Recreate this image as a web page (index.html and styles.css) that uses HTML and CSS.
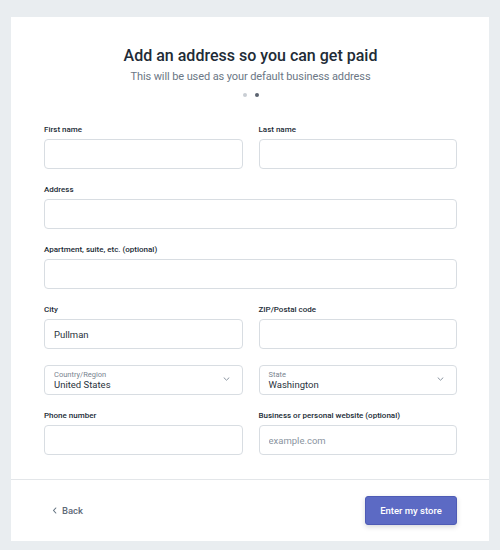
FILE: index.html
```html
<!DOCTYPE html>
<html lang="en">
<head>
<meta charset="utf-8">
<title>Add an address</title>
<link rel="stylesheet" href="styles.css">
</head>
<body>
<div class="card">
  <div class="main">
    <h1 class="title">Add an address so you can get paid</h1>
    <p class="subtitle">This will be used as your default business address</p>
    <div class="dots"><span class="dot"></span><span class="dot active"></span></div>
    <form class="form">
      <div class="row two">
        <div class="field"><label class="label">First name</label><input class="input" type="text"></div>
        <div class="field"><label class="label">Last name</label><input class="input" type="text"></div>
      </div>
      <div class="row">
        <div class="field"><label class="label">Address</label><input class="input" type="text"></div>
      </div>
      <div class="row">
        <div class="field"><label class="label">Apartment, suite, etc. (optional)</label><input class="input" type="text"></div>
      </div>
      <div class="row two">
        <div class="field"><label class="label">City</label><input class="input" type="text" value="Pullman"></div>
        <div class="field"><label class="label">ZIP/Postal code</label><input class="input" type="text"></div>
      </div>
      <div class="row two">
        <div class="select">
          <div class="select-text"><span class="select-label">Country/Region</span><span class="select-value">United States</span></div>
          <svg class="chevron" width="7" height="4" viewBox="0 0 7 4"><path d="M1 0.8l2.5 2.4 2.5-2.4" fill="none" stroke="#8a94a0" stroke-width="1" stroke-linecap="round" stroke-linejoin="round"/></svg>
        </div>
        <div class="select">
          <div class="select-text"><span class="select-label">State</span><span class="select-value">Washington</span></div>
          <svg class="chevron" width="7" height="4" viewBox="0 0 7 4"><path d="M1 0.8l2.5 2.4 2.5-2.4" fill="none" stroke="#8a94a0" stroke-width="1" stroke-linecap="round" stroke-linejoin="round"/></svg>
        </div>
      </div>
      <div class="row two">
        <div class="field"><label class="label">Phone number</label><input class="input" type="text"></div>
        <div class="field"><label class="label">Business or personal website (optional)</label><input class="input" type="text" placeholder="example.com"></div>
      </div>
    </form>
  </div>
  <div class="footer">
    <a class="back" href="#"><svg class="back-icon" width="5" height="7" viewBox="0 0 5 7"><path d="M3.8 1L1.5 3.5 3.8 6" fill="none" stroke="#637381" stroke-width="1.1" stroke-linecap="round" stroke-linejoin="round"/></svg>Back</a>
    <button class="primary" type="button">Enter my store</button>
  </div>
</div>
</body>
</html>
```
FILE: styles.css
```css
* { box-sizing: border-box; }
html, body { margin: 0; padding: 0; }
body {
  background: #e9edf0;
  font-family: Roboto, "Liberation Sans", Arial, sans-serif;
  color: #212b36;
  height: 550px;
  padding-top: 17px;
}
.card {
  background: #fff;
  margin: 0 11px;
  height: 524px;
  display: flex;
  flex-direction: column;
}
.main {
  padding: 28px 32px 24px 33px;
  border-bottom: 1px solid #e3e6e9;
}
.title {
  margin: 0;
  font-size: 16px;
  line-height: 22px;
  font-weight: 500;
  text-align: center;
  color: #212b36;
}
.subtitle {
  margin: 2px 0 0;
  font-size: 11px;
  line-height: 16px;
  letter-spacing: -0.1px;
  text-align: center;
  color: #6b7785;
}
.dots {
  display: flex;
  justify-content: center;
  gap: 8px;
  margin-top: 8px;
  height: 4px;
}
.dot {
  width: 4px;
  height: 4px;
  border-radius: 50%;
  background: #c9ced4;
}
.dot.active { background: #5c6470; }
.form {
  margin-top: 28px;
  display: flex;
  flex-direction: column;
  gap: 16px;
}
.row {
  display: grid;
  grid-template-columns: 1fr;
  gap: 16px;
}
.row.two { grid-template-columns: 1fr 1fr; }
.field { display: flex; flex-direction: column; }
.label {
  font-size: 8px;
  line-height: 10px;
  font-weight: 500;
  color: #212b36;
  margin-bottom: 4px;
}
.input {
  height: 30px;
  width: 100%;
  border: 1px solid #d8dde2;
  border-radius: 4px;
  padding: 0 9px;
  font-family: inherit;
  font-size: 9.5px;
  color: #2a333d;
  background: #fff;
  outline: none;
}
.input::placeholder { color: #8a94a0; }
.select {
  height: 30px;
  border: 1px solid #d8dde2;
  border-radius: 4px;
  padding: 0 12px 0 9px;
  display: flex;
  align-items: center;
  justify-content: space-between;
}
.select-text { display: flex; flex-direction: column; }
.select-label { font-size: 7.5px; line-height: 9px; color: #7a8590; }
.select-value { font-size: 9.5px; line-height: 12px; color: #2a333d; }
.chevron { display: block; margin-top: -3px; }
.footer {
  flex: 1;
  display: flex;
  align-items: center;
  justify-content: space-between;
  padding: 0 32px 0 41px;
}
.back {
  display: flex;
  align-items: center;
  gap: 5px;
  font-size: 9.5px;
  font-weight: 500;
  color: #5f6b78;
  text-decoration: none;
}
.back-icon { display: block; }
.primary {
  width: 92px;
  height: 29px;
  border: 1px solid #4e5bb5;
  border-radius: 3px;
  background: #5c6ac4;
  color: #fff;
  font-family: inherit;
  font-size: 9.5px;
  font-weight: 500;
  box-shadow: 0 2px 5px rgba(33, 43, 54, 0.18);
}
```
